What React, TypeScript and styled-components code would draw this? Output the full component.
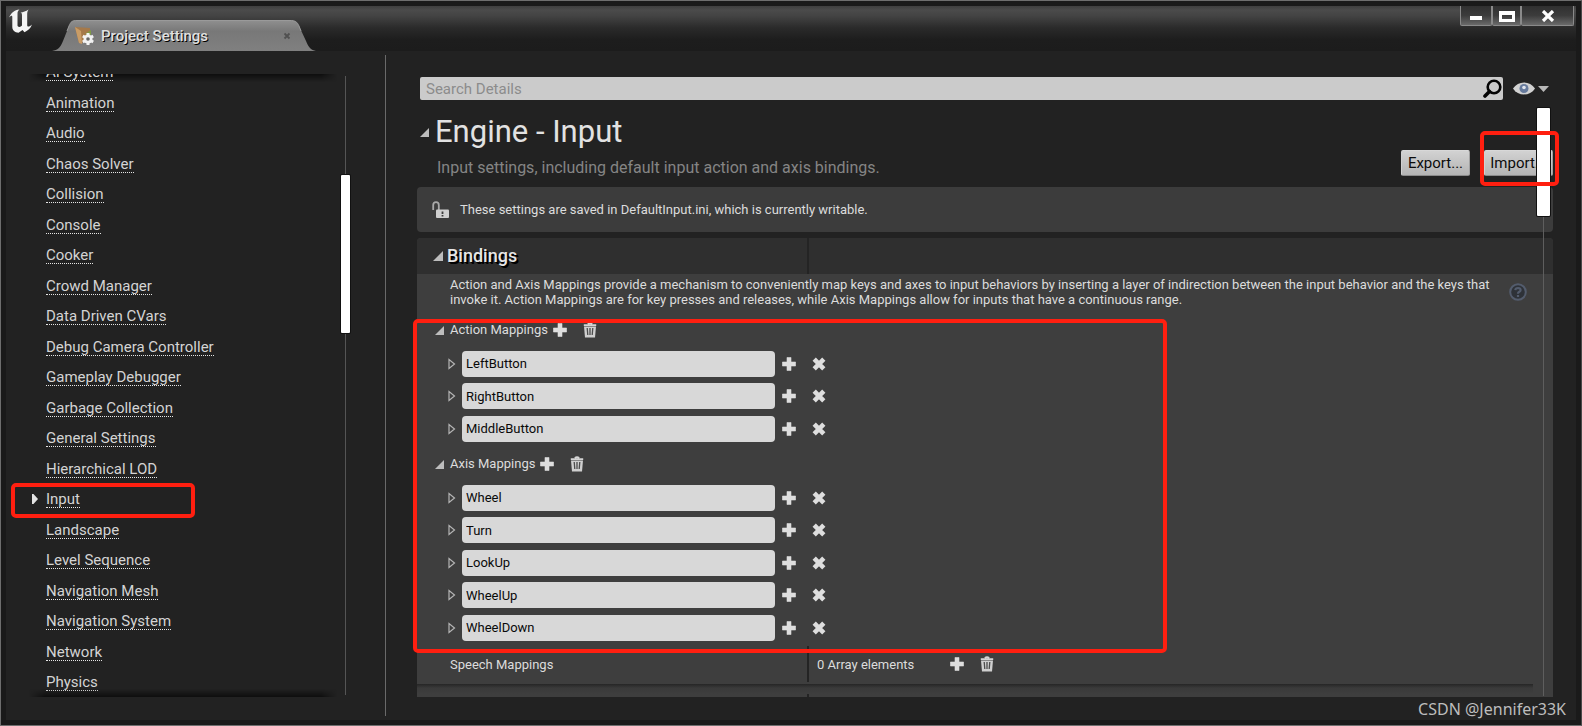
import React from 'react';
import styled, { createGlobalStyle } from 'styled-components';

const RED = '#ff1f10';

const GlobalStyle = createGlobalStyle`
  * { box-sizing: border-box; }
  html, body { margin: 0; padding: 0; background: #1b1b1b; }
  body, button, input { font-family: Roboto, "Open Sans", sans-serif; }
`;

const Window = styled.div`
  height: 100vh;
  min-width: 1200px;
  display: flex;
  flex-direction: column;
  padding: 5px;
  border: 1px solid #6e6e6e;
  border-right-color: #4a4a4a;
  background: #1a1a1a;
  color: #dcdcdc;
  font-size: 13px;
  overflow: hidden;
`;

const TitleBar = styled.header`
  flex: none;
  height: 45px;
  display: flex;
  align-items: flex-start;
  background: linear-gradient(#3f3f3f, #4b4b4b 4px, #434343 10px, #2a2a2a 22px, #1d1d1d 34px, #1c1c1c);
`;

const Logo = styled.svg`
  flex: none;
  width: 26px;
  height: 26px;
  margin: 2px 18px 0 2px;
`;

const Tab = styled.div`
  position: relative;
  width: 264px;
  height: 31px;
  margin-top: 14px;
  padding: 0 25px 0 22px;
  display: flex;
  align-items: center;
`;

const TabShape = styled.svg`
  position: absolute;
  inset: 0;
  width: 100%;
  height: 100%;
`;

const TabIcon = styled.svg`
  position: relative;
  width: 20px;
  height: 20px;
`;

const TabLabel = styled.span`
  position: relative;
  flex: 1;
  margin-left: 7px;
  font-size: 15px;
  font-weight: 500;
  line-height: 20px;
  color: #e0e0e0;
  text-shadow: 1px 1px 0 #000;
`;

const IconButton = styled.button`
  position: relative;
  flex: none;
  display: flex;
  align-items: center;
  justify-content: center;
  padding: 0;
  border: 0;
  background: none;
  color: #d8d8d8;
`;

const WindowButtons = styled.div`
  display: flex;
  margin-left: auto;
  margin-right: 2px;
`;

const WindowButton = styled.button<{ $width: number }>`
  width: ${(p) => p.$width}px;
  height: 20px;
  padding: 0;
  display: flex;
  align-items: center;
  justify-content: center;
  border: 1px solid #8a8a8a;
  border-top: 0;
  border-radius: 0 0 2px 2px;
  background: linear-gradient(#303030, #3c3c3c 50%, #6a6a6a);
`;

const Content = styled.div`
  flex: 1;
  min-height: 0;
  display: flex;
  background: #222;
`;

const Sidebar = styled.aside`
  flex: none;
  width: 379px;
  display: flex;
  padding: 23px 0;
`;

const NavViewport = styled.nav`
  position: relative;
  width: 331px;
  padding-left: 23px;
  display: flex;
  flex-direction: column;
  justify-content: flex-end;
  overflow: hidden;

  &::before, &::after {
    content: '';
    position: absolute;
    left: 23px;
    right: 0;
    height: 8px;
    mask-image: linear-gradient(90deg, transparent, #000 16px calc(100% - 16px), transparent);
  }
  &::before { top: 0; background: linear-gradient(rgba(0, 0, 0, 0.6), transparent); }
  &::after { bottom: 0; background: linear-gradient(transparent, rgba(0, 0, 0, 0.6)); }
`;

const NavList = styled.ul`
  margin: 0;
  padding: 0 0 6px;
  list-style: none;
`;

const NavItem = styled.li`
  position: relative;
  height: 31px;
  display: flex;
  align-items: flex-end;
  &:nth-child(odd) { height: 30px; }
`;

const NavMarker = styled.span`
  width: 17px;
  height: 18px;
  display: flex;
  align-items: center;
  padding-left: 2px;
`;

const NavLink = styled.a`
  color: #d4d4d4;
  font-size: 15px;
  line-height: 16px;
  white-space: nowrap;
  text-decoration: none;
  border-bottom: 1px dotted #e6e6e6;
`;

const Track = styled.div<{ $before: number }>`
  flex: none;
  width: 9px;
  margin: 2px 0;
  margin-left: 4px;
  padding-top: ${(p) => p.$before}px;
  background: linear-gradient(#555, #555) center / 1px 100% no-repeat;
`;

const Thumb = styled.div<{ $length: number }>`
  height: ${(p) => p.$length}px;
  background: #fff;
  border-radius: 1px;
  box-shadow: 0 0 0 1px #111;
`;

const Main = styled.main`
  position: relative;
  flex: 1;
  min-width: 0;
  display: flex;
  flex-direction: column;
  margin: 4px 0;
  padding: 22px 23px 19px 31px;
  border-left: 1px solid #6a6a6a;
`;

const SearchRow = styled.div`
  flex: none;
  display: flex;
  align-items: center;
  padding: 0 4px 0 3px;
`;

const SearchBox = styled.label`
  flex: 1;
  height: 23px;
  display: flex;
  align-items: center;
  padding: 0 1px 0 6px;
  border-radius: 2px;
  background: #cbcbcb;
`;

const SearchInput = styled.input`
  flex: 1;
  min-width: 0;
  padding: 0;
  border: 0;
  outline: 0;
  background: none;
  color: #111;
  font-size: 15px;
  &::placeholder { color: #8c8c8c; opacity: 1; }
`;

const ViewButton = styled(IconButton)`
  width: 37px;
  gap: 3px;
  margin-left: 9px;
`;

const Panel = styled.div`
  flex: 1;
  min-height: 0;
  margin: 0 -8px;
  padding: 0 8px;
  overflow: hidden;
`;

const TitleRow = styled.div`
  display: flex;
  justify-content: space-between;
  height: 87px;
  padding-left: 3px;
`;

const PageTitle = styled.h1`
  display: flex;
  align-items: center;
  gap: 6px;
  margin: 14px 0 0;
  font-size: 31px;
  line-height: 36px;
  font-weight: 400;
  color: #e2e2e2;
`;

const Subtitle = styled.p`
  margin: 8px 0 0;
  padding-left: 17px;
  font-size: 16px;
  line-height: 20px;
  color: #858585;
`;

const PageActions = styled.div`
  display: flex;
  align-items: flex-start;
  gap: 14px;
  padding: 50px 0 0;
`;

const ActionButton = styled.button`
  width: 69px;
  height: 26px;
  padding: 0;
  border: 1px solid #909090;
  border-color: #d8d8d8 #a0a0a0 #8a8a8a #d0d0d0;
  border-radius: 2px;
  background: linear-gradient(#d2d2d2, #b4b4b4);
  color: #0c0c0c;
  font-size: 15px;
`;

const Marked = styled.div`
  position: relative;
`;

const Highlight = styled.div<{ $t: number; $r: number; $b: number; $l: number }>`
  position: absolute;
  z-index: 3;
  top: ${(p) => p.$t}px;
  right: ${(p) => p.$r}px;
  bottom: ${(p) => p.$b}px;
  left: ${(p) => p.$l}px;
  border: 4px solid ${RED};
  border-radius: 5px;
  pointer-events: none;
`;

const Notice = styled.section`
  height: 45px;
  display: flex;
  align-items: center;
  gap: 11px;
  padding-left: 15px;
  margin-bottom: 6px;
  border-radius: 4px;
  background: #3c3c3c;
`;

const Category = styled.section`
  border-radius: 4px 4px 0 0;
  background: #3e3e3e;
`;

const Columns = styled.div<{ $height: number }>`
  display: grid;
  grid-template-columns: 390px 1fr;
  height: ${(p) => p.$height}px;
  align-items: center;
`;

const Cell = styled.div<{ $indent: number }>`
  height: 100%;
  display: flex;
  align-items: center;
  padding-left: ${(p) => p.$indent}px;
  & + & { border-left: 2px solid #242424; }
`;

const CategoryHeader = styled(Columns)`
  border-radius: 4px 4px 0 0;
  background: #2f2f2f;
`;

const CategoryTitle = styled.h2`
  margin: 0 0 0 4px;
  font-size: 18px;
  line-height: 22px;
  font-weight: 500;
  color: #e6e6e6;
  text-shadow: 1px 1px 0 #000, 2px 2px 0 #000;
`;

const Description = styled.div`
  display: flex;
  justify-content: space-between;
  align-items: center;
  height: 36px;
  padding: 0 26px 0 33px;
`;

const DescriptionText = styled.p`
  margin: 0;
  max-width: 1040px;
  line-height: 15px;
`;

const Mappings = styled.div`
  position: relative;
  width: 750px;
  padding-top: 3px;
`;

const GroupRow = styled.div`
  height: 34px;
  display: flex;
  align-items: center;
  padding-left: 18px;
`;

const GroupName = styled.span`
  margin: 0 5px 0 6px;
  line-height: 16px;
`;

const Rows = styled.div`
  padding: 0 0 2px;
`;

const MappingRow = styled.div`
  height: 32px;
  display: flex;
  align-items: center;
  padding-left: 31px;
  &:nth-child(odd) { height: 33px; }
`;

const MappingInput = styled.input`
  width: 313px;
  height: 26px;
  margin: 0 7px 0 6px;
  padding: 0 4px;
  border: 0;
  border-radius: 4px;
  background: #d8d8d8;
  color: #0a0a0a;
  font-size: 13px;
`;

const ArrayCount = styled.span`
  margin-right: 36px;
`;

const Separator = styled.div`
  height: 10px;
  margin: 2px 20px 0 0;
  background: linear-gradient(#262626, #3a3a3a 4px, #3e3e3e);
`;

const MainScroll = styled.div`
  position: absolute;
  z-index: 2;
  top: 53px;
  bottom: 20px;
  right: 26px;
  width: 13px;
  background: linear-gradient(#5e5e5e, #5e5e5e) center / 1px 100% no-repeat;
`;

const Watermark = styled.div`
  position: absolute;
  right: 10px;
  bottom: -3px;
  font-family: "Noto Sans", sans-serif;
  font-size: 16px;
  line-height: 20px;
  color: #bdbdbd;
`;

const ExpandedArrow = ({ size = 10 }: { size?: number }) => (
  <svg width={size} height={size} viewBox="0 0 10 10">
    <path d="M10 0V10H0Z" fill="#bdbdbd" />
  </svg>
);

const CollapsedArrow = () => (
  <svg width="8" height="12" viewBox="0 0 8 12">
    <path d="M1 1.5V10.5L6.5 6Z" fill="none" stroke="#b4b4b4" strokeWidth="1.2" />
  </svg>
);

const PlusIcon = () => (
  <svg width="14" height="14" viewBox="0 0 14 14">
    <path d="M5 .4H9V5H13.600V9H9V13.600H5V9H.4V5H5Z" fill="#dedede" stroke="#dedede" strokeWidth=".6" strokeLinejoin="round" />
  </svg>
);

const CrossIcon = () => (
  <svg width="14" height="14" viewBox="0 0 14 14">
    <path d="M2.200 2.200L11.800 11.800M11.800 2.200L2.200 11.800" stroke="#dedede" strokeWidth="4.600" />
  </svg>
);

const TrashIcon = () => (
  <svg width="14" height="16" viewBox="0 0 14 16">
    <path d="M.8 3.200H13.200M4.800 2Q7 .4 9.200 2" stroke="#d4d4d4" strokeWidth="1.800" fill="none" />
    <path d="M1 4.600H13L12 15.400H2Z" fill="#cfcfcf" />
    <path d="M4.200 6L4.800 13M7 6V13M9.800 6L9.200 13" stroke="#4c4c4c" strokeWidth="1.300" />
  </svg>
);

const AddButton = () => (
  <IconButton aria-label="Add"><PlusIcon /></IconButton>
);

const DeleteButton = styled(IconButton)`
  margin-left: 16px;
`;

const navItems = [
  'AI System', 'Animation', 'Audio', 'Chaos Solver', 'Collision', 'Console', 'Cooker',
  'Crowd Manager', 'Data Driven CVars', 'Debug Camera Controller', 'Gameplay Debugger',
  'Garbage Collection', 'General Settings', 'Hierarchical LOD', 'Input', 'Landscape',
  'Level Sequence', 'Navigation Mesh', 'Navigation System', 'Network', 'Physics',
];

const groups = [
  { name: 'Action Mappings', items: ['LeftButton', 'RightButton', 'MiddleButton'] },
  { name: 'Axis Mappings', items: ['Wheel', 'Turn', 'LookUp', 'WheelUp', 'WheelDown'] },
];

function AppTitleBar() {
  return (
    <TitleBar>
      <Logo viewBox="0 0 26 26">
        <path
          d="M1 9.500C3 5 6.500 2 11.500 1.500C9.800 2.600 9.500 4 9.500 6V17.500C9.500 19.200 12.500 19.600 14 17.600V7.500C14 5.500 13.500 4.800 12.500 4.500C15 4.300 18 3.200 20.500 1.500C19.500 3 19.200 4.500 19.200 6.500V17C19.200 19 21 19.300 24 16.500C22.500 20.500 20 22.500 16.500 24.200L14.500 22L10.500 24.800C7 24.500 4.300 22.300 4.300 19V9C4.300 7.300 3 7.500 1 9.500Z"
          fill="#f4f4f4"
        />
      </Logo>
      <Tab>
        <TabShape viewBox="0 0 264 31" preserveAspectRatio="none">
          <defs>
            <linearGradient id="tab" x1="0" y1="0" x2="0" y2="1">
              <stop offset="0" stopColor="#8f8f8f" />
              <stop offset=".35" stopColor="#787878" />
              <stop offset="1" stopColor="#808080" />
            </linearGradient>
          </defs>
          <path d="M0 31C6 30 8 28 11 21L17 6C19 1.500 20 .5 25 .5H238C243 .5 245 1.500 247 6L254 21C257 28 259 30 264 31Z" fill="url(#tab)" />
          <path d="M15 11L17 6C19 1.500 20 .5 25 .5H238C243 .5 245 1.500 247 6L249 11" fill="none" stroke="#9a9a9a" />
        </TabShape>
        <TabIcon viewBox="0 0 20 20">
          <path d="M1 1L16 2V9L8 17L5 17Z" fill="#a5794a" />
          <path d="M1 1L5 17L8 18L7 5Z" fill="#c99c66" />
          <path d="M11 8L17 4V9Z" fill="#7f9a45" />
          <g transform="translate(14 13)" fill="#f2f2f2">
            <circle r="4.500" />
            {[0, 60, 120, 180, 240, 300].map((a) => (
              <rect key={a} x="-1.500" y="-6" width="3" height="4" transform={`rotate(${a})`} />
            ))}
            <circle r="1.800" fill="#666" />
          </g>
        </TabIcon>
        <TabLabel>Project Settings</TabLabel>
        <IconButton aria-label="Close tab">
          <svg width="8" height="8" viewBox="0 0 8 8">
            <path d="M1.500 1.500L6.500 6.500M6.500 1.500L1.500 6.500" stroke="#505050" strokeWidth="1.800" />
          </svg>
        </IconButton>
      </Tab>
      <WindowButtons>
        <WindowButton aria-label="Minimize" $width={32}>
          <svg width="14" height="12"><rect x="1" y="6" width="12" height="4" fill="#fff" /></svg>
        </WindowButton>
        <WindowButton aria-label="Maximize" $width={29}>
          <svg width="16" height="12"><path d="M0 1H16V12H0ZM3 5V9H13V5Z" fill="#fff" fillRule="evenodd" /></svg>
        </WindowButton>
        <WindowButton aria-label="Close" $width={53}>
          <svg width="14" height="12"><path d="M2 1L12 11M12 1L2 11" stroke="#fff" strokeWidth="3.200" /></svg>
        </WindowButton>
      </WindowButtons>
    </TitleBar>
  );
}

function SectionNav() {
  return (
    <Sidebar>
      <NavViewport aria-label="Engine settings">
        <NavList>
          {navItems.map((name) => (
            <NavItem key={name}>
              <NavMarker>
                {name === 'Input' && (
                  <svg width="8" height="12" viewBox="0 0 8 12"><path d="M1 1H2.500L7 6L2.500 11H1Z" fill="#e4e4e4" /></svg>
                )}
              </NavMarker>
              <NavLink href={`#${name}`}>{name}</NavLink>
              {name === 'Input' && <Highlight $t={5} $r={142} $b={-10} $l={-18} />}
            </NavItem>
          ))}
        </NavList>
      </NavViewport>
      <Track $before={99}><Thumb $length={158} /></Track>
    </Sidebar>
  );
}

export default function App() {
  return (
    <Window>
      <GlobalStyle />
      <AppTitleBar />
      <Content>
        <SectionNav />
        <Main>
          <SearchRow>
            <SearchBox>
              <SearchInput type="text" aria-label="Search Details" placeholder="Search Details" />
              <svg width="19" height="19" viewBox="0 0 19 19" fill="none" stroke="#050505">
                <circle cx="11" cy="8" r="6.300" strokeWidth="2.600" />
                <path d="M6.500 12.500L2 17" strokeWidth="3.600" strokeLinecap="round" />
              </svg>
            </SearchBox>
            <ViewButton aria-label="View options">
              <svg width="22" height="13" viewBox="0 0 22 13">
                <path d="M0 6.500C5-1.500 17-1.500 22 6.500C17 14.500 5 14.500 0 6.500Z" fill="#d2d2d2" />
                <circle cx="11" cy="6.500" r="4.500" fill="#667a9c" />
                <circle cx="11" cy="5.500" r="1.800" fill="#dfe4ec" />
              </svg>
              <svg width="11" height="6" viewBox="0 0 11 6"><path d="M0 0H11L5.500 6Z" fill="#b8b8b8" /></svg>
            </ViewButton>
          </SearchRow>
          <Panel>
            <TitleRow>
              <div>
                <PageTitle><ExpandedArrow size={9} />Engine - Input</PageTitle>
                <Subtitle>Input settings, including default input action and axis bindings.</Subtitle>
              </div>
              <PageActions>
                <ActionButton>Export...</ActionButton>
                <Marked>
                  <ActionButton>Import...</ActionButton>
                  <Highlight $t={-19} $r={-6} $b={-10} $l={-4} />
                </Marked>
              </PageActions>
            </TitleRow>
            <Notice>
              <svg width="17" height="18" viewBox="0 0 17 18">
                <path d="M1.200 9V4Q1.200 1.200 4 1.200Q6.800 1.200 6.800 4V9" fill="none" stroke="#a8a8a8" strokeWidth="1.800" />
                <rect x="4" y="8.500" width="13" height="8.500" rx="1" fill="#cfcfcf" />
                <path d="M10.500 10.500V13M10.500 14V15.500" stroke="#3c3c3c" strokeWidth="1.800" />
              </svg>
              <span>These settings are saved in DefaultInput.ini, which is currently writable.</span>
            </Notice>
            <Category>
              <CategoryHeader $height={36}>
                <Cell $indent={16}><ExpandedArrow /><CategoryTitle>Bindings</CategoryTitle></Cell>
                <Cell $indent={0} />
              </CategoryHeader>
              <Description>
                <DescriptionText>
                  Action and Axis Mappings provide a mechanism to conveniently map keys and axes to input behaviors by inserting a layer of indirection between the input behavior and the keys that invoke it. Action Mappings are for key presses and releases, while Axis Mappings allow for inputs that have a continuous range.
                </DescriptionText>
                <IconButton aria-label="Help">
                  <svg width="18" height="18" viewBox="0 0 18 18" fill="none" stroke="#535c6d">
                    <circle cx="9" cy="9" r="7.800" fill="#2e3238" strokeWidth="2" />
                    <path d="M6.300 7.200Q6.500 5 9 5Q11.600 5.100 11.600 7Q11.600 8.200 10 9Q9 9.500 9 10.800M9 12V14" strokeWidth="2.200" />
                  </svg>
                </IconButton>
              </Description>
              <Mappings>
                {groups.map((group) => (
                  <div key={group.name}>
                    <GroupRow>
                      <ExpandedArrow size={9} />
                      <GroupName>{group.name}</GroupName>
                      <AddButton />
                      <DeleteButton aria-label="Remove all"><TrashIcon /></DeleteButton>
                    </GroupRow>
                    <Rows>
                      {group.items.map((item) => (
                        <MappingRow key={item}>
                          <IconButton aria-label={`Expand ${item}`}><CollapsedArrow /></IconButton>
                          <MappingInput type="text" aria-label="Mapping name" defaultValue={item} />
                          <AddButton />
                          <DeleteButton aria-label="Remove"><CrossIcon /></DeleteButton>
                        </MappingRow>
                      ))}
                    </Rows>
                  </div>
                ))}
                <Highlight $t={9} $r={0} $b={-7} $l={-4} />
              </Mappings>
              <Columns $height={36}>
                <Cell $indent={33}>Speech Mappings</Cell>
                <Cell $indent={8}>
                  <ArrayCount>0 Array elements</ArrayCount>
                  <AddButton />
                  <DeleteButton aria-label="Remove all"><TrashIcon /></DeleteButton>
                </Cell>
              </Columns>
              <Separator />
              <Columns $height={36}>
                <Cell $indent={33} />
                <Cell $indent={8} />
              </Columns>
            </Category>
          </Panel>
          <MainScroll><Thumb $length={108} /></MainScroll>
          <Watermark>CSDN @Jennifer33K</Watermark>
        </Main>
      </Content>
    </Window>
  );
}
